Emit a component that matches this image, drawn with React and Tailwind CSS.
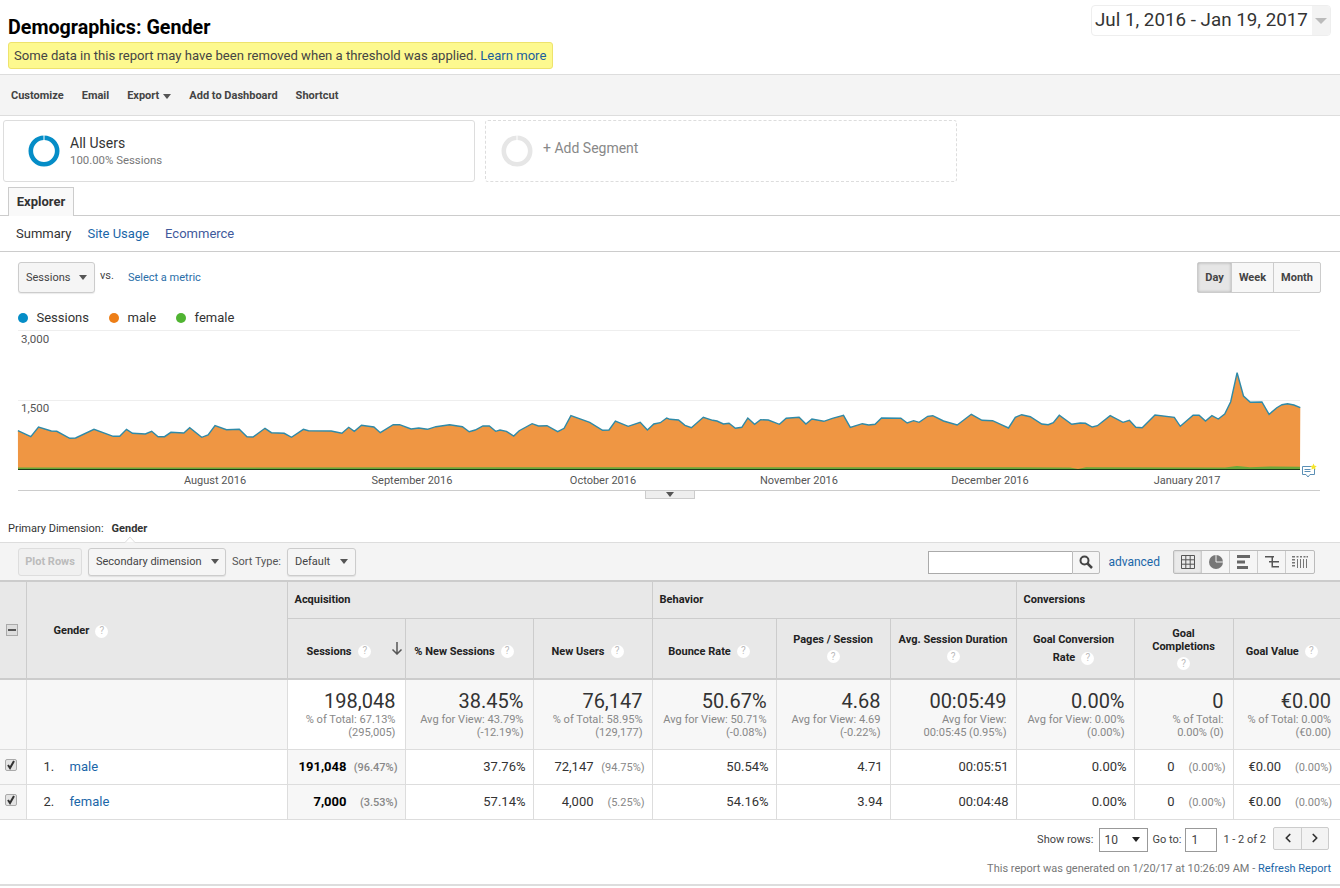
import { ChevronLeft, ChevronRight } from "lucide-react";

const leftPts = [[42,392],[72,410],[90,381],[120,393],[133,394],[163,415],[177,414],[220,388],[265,409],[280,409],[296,388],[310,400],[340,402],[355,394],[370,410],[385,410],[400,397],[430,399],[444,383],[472,412],[487,405],[503,377],[530,389],[560,388],[578,410],[592,411],[620,385],[635,398],[665,400],[682,412],[710,388],[722,392],[775,393],[800,400],[816,382],[829,394],[846,376],[875,381],[890,398],[920,374],[935,374],[962,387],[980,384],[1000,388],[1020,380],[1052,374],[1082,380],[1098,395],[1112,390],[1130,378],[1145,378],[1160,394],[1170,390],[1185,394],[1202,408],[1215,392],[1245,371],[1260,378],[1280,377],[1305,395],[1320,385],[1336,347],[1380,367],[1410,391],[1425,390],[1440,363],[1470,379],[1498,367],[1515,390],[1530,372],[1545,368],[1560,354]];
const rightPts = [[0,358],[20,360],[35,376],[50,383],[78,352],[100,361],[110,363],[125,372],[138,370],[153,385],[168,382],[182,354],[198,373],[212,359],[230,360],[256,373],[272,355],[302,352],[318,372],[332,357],[360,364],[380,355],[406,346],[422,382],[450,371],[465,375],[480,373],[495,354],[540,355],[555,369],[570,362],[583,367],[603,349],[615,347],[640,363],[672,375],[705,343],[730,361],[755,362],[775,374],[792,384],[808,352],[823,344],[843,350],[870,372],[885,374],[897,368],[911,346],[940,373],[960,369],[972,370],[988,381],[1000,377],[1030,347],[1060,367],[1075,361],[1090,382],[1105,383],[1135,345],[1180,352],[1194,379],[1224,346],[1238,346],[1253,363],[1268,347],[1283,357],[1298,342],[1312,305],[1327,218],[1342,288],[1358,307],[1385,306],[1402,343],[1420,323],[1432,314],[1445,311],[1460,315],[1475,323]];

const fmt = (n) => n.toFixed(1);
const line = [
  ...leftPts.map(([x, y]) => [x / 2.34, y / 3 - 30]),
  ...rightPts.map(([x, y]) => [670 + x / 2.34, y / 3 - 30]),
];
const linePath = line.map(([x, y], i) => `${i ? "L" : "M"}${fmt(x)} ${fmt(y)}`).join(" ");
const areaPath = `${linePath} L1300 139 L18 139 Z`;

const monthLabels = [
  ["August 2016", 215],
  ["September 2016", 412],
  ["October 2016", 603],
  ["November 2016", 799],
  ["December 2016", 990],
  ["January 2017", 1187],
];

const Caret = ({ className = "border-t-[#555]" }) => (
  <span className={`inline-block w-0 h-0 border-x-[4px] border-x-transparent border-t-[5px] ${className}`} />
);

const Help = () => (
  <span className="inline-flex items-center justify-center w-[13px] h-[13px] rounded-full bg-white text-[#bbb] text-[10px] font-normal leading-none align-middle shrink-0">?</span>
);

const Ring = ({ color }) => (
  <svg width="32" height="32" viewBox="0 0 32 32">
    <circle cx="16" cy="16" r="13.2" fill="none" stroke={color} strokeWidth="4.6" />
    <rect x="15.5" y="0" width="1" height="6" fill="#fff" />
  </svg>
);

const SelectBtn = ({ children, className }) => (
  <div className={`flex items-center justify-between h-[28px] border border-[#ccc] rounded-[3px] bg-[#f5f5f5] text-[11px] text-[#444] shadow-[0_1px_1px_rgba(0,0,0,0.08)] ${className}`}>
    <span className="pt-[1px]">{children}</span>
    <Caret />
  </div>
);

const Chart = () => (
  <svg width="1340" height="160" viewBox="0 0 1340 160" className="block">
    <line x1="18" x2="1300" y1="0.5" y2="0.5" stroke="#eee" />
    <line x1="18" x2="1300" y1="70.5" y2="70.5" stroke="#eee" />
    <text x="21" y="13" fontSize="11.5" fill="#555">3,000</text>
    <text x="21" y="82" fontSize="11.5" fill="#555">1,500</text>
    <path d={areaPath} fill="#ef9643" />
    <path d={linePath} fill="none" stroke="#2f8aa8" strokeWidth="1.4" />
    <path d="M18 137.6 L500 137.200 L900 137.200 L1070 137.400 L1078 139 L1086 137.200 L1225 137.400 L1237 136 L1250 137.200 L1270 136.500 L1300 136.800 L1300 139 L18 139 Z" fill="#6aa83a" />
    <line x1="18" x2="1300" y1="139.5" y2="139.5" stroke="#1f3a1a" strokeWidth="1" />
    {monthLabels.map(([label, x]) => (
      <text key={label} x={x} y="154" fontSize="11" fill="#555" textAnchor="middle">{label}</text>
    ))}
    {/* annotation icon */}
    <path d="M1302.5 136.5h12v8h-4.500l-2 2.500-2-2.500h-3.500z" fill="#fff" stroke="#5b8fb5" />
    <path d="M1304.5 139.5h6M1304.5 141.5h6" stroke="#5b8fb5" />
    <path d="M1313.5 133.500l1 2.200 2.300.2-1.700 1.500.5 2.300-2.100-1.200-2.100 1.200.5-2.300-1.700-1.500 2.300-.2z" fill="#f5e52c" />
  </svg>
);

const ViewIcons = () => (
  <div className="flex h-[24px] border border-[#bbb] rounded-[2px] bg-[#f5f5f5]">
    <div className="flex items-center justify-center w-[28px] border-r border-[#ccc] bg-[#eaeaea] shadow-[inset_0_0_2px_rgba(0,0,0,0.2)]">
      <svg width="14" height="14" viewBox="0 0 14 14" fill="none" stroke="#555"><path d="M.5.5h13v13H.5zM.5 4.800h13M.5 9.200h13M4.800.5v13M9.200.5v13" /></svg>
    </div>
    <div className="flex items-center justify-center w-[28px] border-r border-[#ccc]">
      <svg width="14" height="14" viewBox="0 0 14 14"><circle cx="7" cy="7" r="7" fill="#777" /><path d="M7 0v7h7" fill="none" stroke="#eee" /></svg>
    </div>
    <div className="flex items-center justify-center w-[28px] border-r border-[#ccc]">
      <svg width="14" height="14" viewBox="0 0 14 14" fill="#666"><path d="M0 0h13v3H0zM0 5.500h8v3H0zM0 11h11v3H0z" /></svg>
    </div>
    <div className="flex items-center justify-center w-[28px] border-r border-[#ccc]">
      <svg width="14" height="14" viewBox="0 0 14 14" fill="#555"><path d="M0 1h9v1.500H8V6h6v1.500H8V11h6v1.500H6.500V7.500H4V6h2.500V2.500H0z" /></svg>
    </div>
    <div className="flex items-center justify-center w-[28px]">
      <svg width="16" height="12" viewBox="0 0 16 12" fill="#777"><path d="M0 0h3v1.500H0zM4.500 0h2v1.500h-2zM8 0h2v1.500H8zM11.500 0h2v1.500h-2zM14.500 0h1.500v1.500h-1.500zM0 3h3v1.500H0zM0 6h3v1.500H0zM0 9h3v1.500H0zM5 3h1v9H5zM8 3h1v9H8zM11 3h1v9h-1zM14 3h1v9h-1z" /></svg>
    </div>
  </div>
);

const Check = () => (
  <div className="flex items-center justify-center w-[12px] h-[12px] border border-[#aaa] rounded-[2px] bg-[#e4e4e4]">
    <svg width="10" height="10" viewBox="0 0 10 10"><path d="M2 5l2 3 4-7" fill="none" stroke="#333" strokeWidth="2" /></svg>
  </div>
);

const totals = [
  ["198,048", "% of Total: 67.13%", "(295,005)", true],
  ["38.45%", "Avg for View: 43.79%", "(-12.19%)"],
  ["76,147", "% of Total: 58.95%", "(129,177)"],
  ["50.67%", "Avg for View: 50.71%", "(-0.08%)"],
  ["4.68", "Avg for View: 4.69", "(-0.22%)"],
  ["00:05:49", "Avg for View:", "00:05:45 (0.95%)"],
  ["0.00%", "Avg for View: 0.00%", "(0.00%)"],
  ["0", "% of Total:", "0.00% (0)"],
  ["€0.00", "% of Total: 0.00%", "(€0.00)"],
];

const rows = [
  { name: "male", sessions: "191,048", sessionsPct: "(96.47%)", newPct: "37.76%", users: "72,147", usersPct: "(94.75%)", bounce: "50.54%", pages: "4.71", dur: "00:05:51" },
  { name: "female", sessions: "7,000", sessionsPct: "(3.53%)", newPct: "57.14%", users: "4,000", usersPct: "(5.25%)", bounce: "54.16%", pages: "3.94", dur: "00:04:48" },
];

const ValuePct = ({ value, pct, bold }) => (
  <div className="flex justify-end items-baseline">
    <span className={bold ? "font-bold text-black" : ""}>{value}</span>
    <span className={`w-[51px] text-right text-[11px] text-[#888] ${bold ? "font-medium" : ""}`}>{pct}</span>
  </div>
);

const bodyCell = "border-r border-b border-[#ddd] p-0 pr-[7px] text-right text-[13px] text-[#333] align-middle";
const groupHead = "border-b border-[#ccc] bg-[#e8e8e8] p-0 pl-[7px] text-left text-[11px] font-bold text-[#222]";
const metricHead = "border-b-2 border-[#ccc] bg-[#e8e8e8] p-0";

export default function App() {
  return (
    <div className="w-[1340px] h-[888px] overflow-hidden bg-white [font-family:Roboto,sans-serif] text-[#333]">
      {/* title */}
      <div className="flex justify-between h-[74px] pl-2 pr-[9px]">
        <div className="pt-[15px]">
          <h1 className="text-[19.7px] leading-[25px] font-bold text-black">Demographics: Gender</h1>
          <div className="w-[545px] h-[27px] mt-[2px] pl-[5px] border border-[#eee36d] rounded-[3px] bg-[#fdf98f] text-[13.1px] leading-[25px] text-[#444] whitespace-nowrap">
            Some data in this report may have been removed when a threshold was applied. <span className="text-[#1a5f9e]">Learn more</span>
          </div>
        </div>
        <div className="flex w-[240px] h-[31px] mt-[5px] border border-[#eee] rounded-[4px] overflow-hidden">
          <div className="flex-1 pl-[3px] text-[18.8px] leading-[29px] text-[#333] whitespace-nowrap">Jul 1, 2016 - Jan 19, 2017</div>
          <div className="flex items-center justify-center w-[18px] bg-[#f3f3f3]">
            <Caret className="border-t-[#bbb] border-x-[6px] border-t-[6px]" />
          </div>
        </div>
      </div>

      {/* toolbar */}
      <div className="flex items-center gap-[18px] h-[42px] pl-[11px] pt-[2px] border-y border-[#ddd] bg-[#f4f4f4] text-[11px] font-bold text-[#444]">
        <span>Customize</span>
        <span>Email</span>
        <span className="flex items-center gap-[4px]">Export <Caret /></span>
        <span>Add to Dashboard</span>
        <span>Shortcut</span>
      </div>

      {/* segments */}
      <div className="flex gap-[10px] pl-[3px] pt-[4px]">
        <div className="flex items-center w-[472px] h-[62px] pl-[24px] border border-[#ddd] rounded-[3px]">
          <Ring color="#058dc7" />
          <div className="ml-[10px]">
            <div className="text-[14px] leading-[17px] text-[#333]">All Users</div>
            <div className="text-[11.4px] leading-[16px] text-[#777]">100.00% Sessions</div>
          </div>
        </div>
        <div className="flex items-center w-[472px] h-[62px] pl-[15px] border border-dashed border-[#ddd] rounded-[3px]">
          <Ring color="#e6e6e6" />
          <span className="ml-[10px] -mt-[6px] text-[14px] text-[#888]">+ Add Segment</span>
        </div>
      </div>

      {/* tabs */}
      <div className="h-[34px] pl-2 pt-[5px] border-b border-[#ccc]">
        <div className="w-[66px] h-[29px] border border-b-0 border-[#ccc] bg-[#f9f9f9] text-center text-[13px] font-bold leading-[28px] text-[#333]">Explorer</div>
      </div>
      <div className="flex gap-4 h-[36px] pl-4 border-b border-[#ccc] text-[13px] leading-[35px]">
        <span className="text-[#333]">Summary</span>
        <span className="text-[#1a66a8]">Site Usage</span>
        <span className="text-[#3f5a9c]">Ecommerce</span>
      </div>

      {/* metric selectors */}
      <div className="flex justify-between h-[31px] mt-[10px] pl-[18px] pr-[19px]">
        <div className="flex items-start">
          <SelectBtn className="w-[77px] !h-[31px] pl-[7px] pr-[7px]">Sessions</SelectBtn>
          <span className="ml-[5px] mt-[6px] text-[11px] text-[#444]">vs.</span>
          <span className="ml-[14px] mt-[8px] text-[11px] text-[#2a6ea8]">Select a metric</span>
        </div>
        <div className="flex w-[124px] h-[31px] border border-[#ccc] rounded-[2px] bg-[#f7f7f7] text-[11px] font-bold leading-[29px] text-[#444] text-center">
          <div className="w-[34px] border-r border-[#ccc] bg-[#e6e6e6] shadow-[inset_0_0_3px_rgba(0,0,0,0.25)]">Day</div>
          <div className="w-[42px] border-r border-[#ccc]">Week</div>
          <div className="flex-1">Month</div>
        </div>
      </div>

      {/* legend */}
      <div className="flex items-center gap-[20px] h-[37px] pl-[18px] pt-[12px] text-[13px] text-[#333]">
        <span className="flex items-center gap-[8.5px]"><i className="w-[10px] h-[10px] rounded-full bg-[#058dc7]" />Sessions</span>
        <span className="flex items-center gap-[8.5px]"><i className="w-[10px] h-[10px] rounded-full bg-[#ed7e17]" />male</span>
        <span className="flex items-center gap-[8.5px]"><i className="w-[10px] h-[10px] rounded-full bg-[#50b432]" />female</span>
      </div>

      <Chart />

      <div className="w-[1302px] h-[8px] ml-[18px] border-t border-[#ccc]">
        <div className="flex items-center justify-center w-[50px] h-[8px] ml-[627px] border border-t-0 border-[#ccc] bg-[#eee]">
          <Caret className="border-t-[#555]" />
        </div>
      </div>

      {/* primary dimension */}
      <div className="flex h-[45px] pl-2 pt-[23px] border-b border-[#ddd] text-[11px] leading-[15px]">
        <span className="text-[#333]">Primary Dimension:</span>
        <span className="relative ml-2 font-bold text-[#333]">
          Gender
          <svg width="12" height="7" viewBox="0 0 12 7" className="absolute left-[12px] top-[15px]">
            <path d="M0 6.500h1L6 1l5 5.500h1" fill="#fff" stroke="#ddd" />
          </svg>
        </span>
      </div>

      {/* table controls */}
      <div className="flex items-center justify-between h-[37px] pl-[18px] pr-[25px] bg-[#f4f4f4] text-[11px]">
        <div className="flex items-center">
          <div className="w-[64px] h-[28px] border border-[#ddd] rounded-[3px] bg-[#f0f0f0] text-center font-bold leading-[26px] text-[#bbb]">Plot Rows</div>
          <SelectBtn className="w-[138px] ml-[6px] pl-[7px] pr-[6px]">Secondary dimension</SelectBtn>
          <span className="ml-[6px] mr-[6px] pt-[1px] text-[#555]">Sort Type:</span>
          <SelectBtn className="w-[69px] pl-[7px] pr-[7px]">Default</SelectBtn>
        </div>
        <div className="flex items-center pt-[1px]">
          <div className="flex h-[23px]">
            <div className="w-[144px] border border-[#aaa] border-r-0 bg-white" />
            <div className="flex items-center justify-center w-[28px] border border-[#bbb] rounded-r-[2px] bg-[#f5f5f5]">
              <svg width="14" height="14" viewBox="0 0 14 14" fill="none" stroke="#444"><circle cx="5.500" cy="5.500" r="4" strokeWidth="2" /><path d="M8.500 8.500L13 13" strokeWidth="2.500" /></svg>
            </div>
          </div>
          <span className="ml-[8px] mr-[13px] text-[12px] text-[#1a66a8]">advanced</span>
          <ViewIcons />
        </div>
      </div>

      {/* report table */}
      <table className="table-fixed border-collapse w-[1340px] border-t-2 border-[#ccc]">
        <colgroup>
          <col className="w-[26px]" />
          <col className="w-[261px]" />
          <col className="w-[118px]" />
          <col className="w-[128px]" />
          <col className="w-[119px]" />
          <col className="w-[124px]" />
          <col className="w-[114px]" />
          <col className="w-[126px]" />
          <col className="w-[118px]" />
          <col className="w-[99px]" />
          <col className="w-[107px]" />
        </colgroup>
        <thead>
          <tr className="h-[37px]">
            <th rowSpan={2} className="border-r border-b-2 border-[#ccc] bg-[#e8e8e8] p-0">
              <div className="flex items-center justify-center w-[12px] h-[12px] ml-[6px] border border-[#aaa] bg-[#ddd]">
                <span className="w-[8px] h-[2px] bg-[#555]" />
              </div>
            </th>
            <th rowSpan={2} className="border-r border-b-2 border-[#ccc] bg-[#e8e8e8] p-0 pl-[27px] pt-[2px] text-left text-[11px] font-bold text-[#222]">
              <span className="flex items-center gap-[6px]">Gender <Help /></span>
            </th>
            <th colSpan={3} className={`${groupHead} border-r`}>Acquisition</th>
            <th colSpan={3} className={`${groupHead} border-r`}>Behavior</th>
            <th colSpan={3} className={groupHead}>Conversions</th>
          </tr>
          <tr className="h-[61px] text-[11px] font-bold text-[#222] leading-[13px]">
            <th className={`${metricHead} border-r`}>
              <div className="flex items-center gap-[7px] pl-[19px] pt-[6px]">
                Sessions <Help />
                <svg width="12" height="13" viewBox="0 0 12 13" className="ml-[13px] -mt-[5px]" fill="none" stroke="#555" strokeWidth="1.500"><path d="M6 0v12M1.500 7.500L6 12l4.500-4.500" /></svg>
              </div>
            </th>
            <th className={`${metricHead} border-r`}>
              <div className="flex items-center justify-center gap-[6px] pt-[6px] pr-[10px]">% New Sessions <Help /></div>
            </th>
            <th className={`${metricHead} border-r`}>
              <div className="flex items-center justify-center gap-[6px] pt-[6px] pr-[10px]">New Users <Help /></div>
            </th>
            <th className={`${metricHead} border-r`}>
              <div className="flex items-center justify-center gap-[6px] pt-[6px] pr-[10px]">Bounce Rate <Help /></div>
            </th>
            <th className={`${metricHead} border-r`}>
              <div>Pages / Session</div>
              <div className="mt-[3px]"><Help /></div>
            </th>
            <th className={`${metricHead} border-r`}>
              <div>Avg. Session Duration</div>
              <div className="mt-[3px]"><Help /></div>
            </th>
            <th className={`${metricHead} border-r leading-[18px]`}>
              <div className="pt-[2px] pr-[3px]">Goal Conversion</div>
              <div className="flex items-center justify-center gap-[6px] pr-[3px]">Rate <Help /></div>
            </th>
            <th className={`${metricHead} border-r`}>
              <div className="pt-[1px]">Goal<br />Completions</div>
              <div className="mt-[3px]"><Help /></div>
            </th>
            <th className={metricHead}>
              <div className="flex items-center justify-center gap-[6px] pt-[6px] pr-[10px]">Goal Value <Help /></div>
            </th>
          </tr>
        </thead>
        <tbody>
          <tr className="h-[70px]">
            <td className="border-r border-b border-[#ddd] bg-[#f7f7f7]" />
            <td className="border-r border-b border-[#ddd] bg-[#f7f7f7]" />
            {totals.map(([value, a, b, white], i) => (
              <td key={i} className={`border-b border-[#ddd] p-0 pr-[9px] text-right align-top ${i < 8 ? "border-r" : ""} ${white ? "bg-white" : "bg-[#f7f7f7]"}`}>
                <div className="mt-[9px] text-[20px] leading-[24px] text-[#333]">{value}</div>
                <div className="text-[11.1px] leading-[13px] text-[#888]">{a}</div>
                <div className="text-[11.1px] leading-[13px] text-[#888]">{b}</div>
              </td>
            ))}
          </tr>
          {rows.map((r, i) => (
            <tr key={r.name} className="h-[35px]">
              <td className="border-r border-b border-[#ddd] p-0 bg-[#f7f7f7]">
                <div className="ml-[5px] -mt-[3px]"><Check /></div>
              </td>
              <td className="border-r border-b border-[#ddd] p-0 pl-[17px] text-[13px]">
                <span className="inline-block w-[26px] text-[#333]">{i + 1}.</span>
                <span className="text-[#1a66a8]">{r.name}</span>
              </td>
              <td className={`${bodyCell} bg-[#f7f7f7]`}><ValuePct value={r.sessions} pct={r.sessionsPct} bold /></td>
              <td className={bodyCell}>{r.newPct}</td>
              <td className={bodyCell}><ValuePct value={r.users} pct={r.usersPct} /></td>
              <td className={bodyCell}>{r.bounce}</td>
              <td className={bodyCell}>{r.pages}</td>
              <td className={bodyCell}>{r.dur}</td>
              <td className={bodyCell}>0.00%</td>
              <td className={bodyCell}><ValuePct value="0" pct="(0.00%)" /></td>
              <td className={`${bodyCell} border-r-0 !pr-2`}><ValuePct value="€0.00" pct="(0.00%)" /></td>
            </tr>
          ))}
        </tbody>
      </table>

      {/* pagination */}
      <div className="flex items-center justify-end h-[24px] mt-[8px] pr-[11px] text-[11px] text-[#444]">
        <span className="pt-[1px]">Show rows:</span>
        <div className="flex items-center justify-between w-[49px] h-[24px] ml-[6px] pl-[4px] pr-[7px] border border-[#999] bg-white text-[12px]">
          10 <Caret className="border-t-[#222]" />
        </div>
        <span className="ml-[4px] pt-[1px]">Go to:</span>
        <div className="w-[32px] h-[24px] ml-[4px] pl-[5px] border border-[#999] bg-white text-[12px] leading-[22px]">1</div>
        <span className="ml-[6px] mr-[7px] pt-[1px]">1 - 2 of 2</span>
        <div className="flex w-[56px] h-[23px] -mt-[3px] border border-[#ccc] rounded-[2px] bg-[#f3f3f3]">
          <div className="flex items-center justify-center w-[28px] border-r border-[#ccc]"><ChevronLeft size={14} strokeWidth={3} color="#333" /></div>
          <div className="flex items-center justify-center flex-1"><ChevronRight size={14} strokeWidth={3} color="#333" /></div>
        </div>
      </div>
      <div className="h-[34px] pt-[9px] pr-[9px] border-b-2 border-[#ddd] text-right text-[11px] leading-[15px] text-[#777]">
        This report was generated on 1/20/17 at 10:26:09 AM - <span className="text-[#1a66a8]">Refresh Report</span>
      </div>
    </div>
  );
}
